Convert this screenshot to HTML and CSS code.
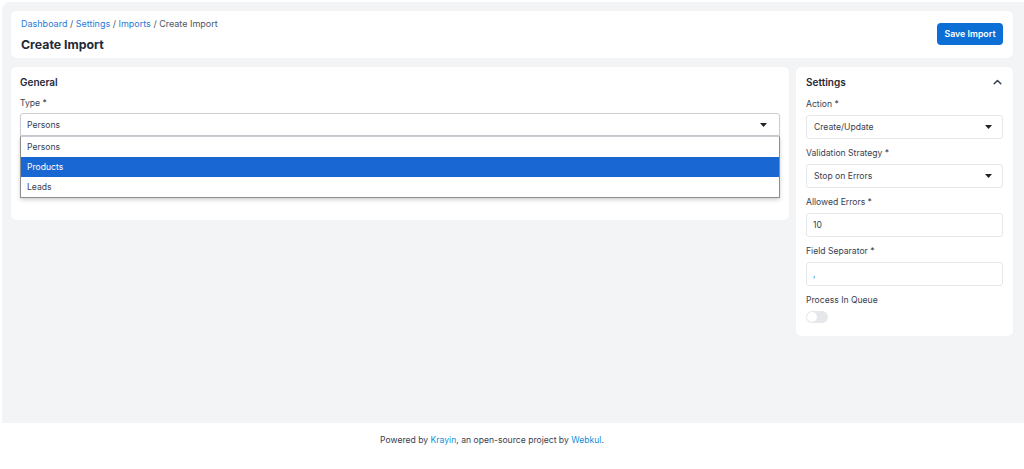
FILE: index.html
```html
<!DOCTYPE html>
<html>
<head>
<meta charset="utf-8">
<link rel="stylesheet" href="styles.css">
</head>
<body>
<div class="page">
  <main class="main">
    <div class="header card">
      <div class="header-text">
        <div class="crumbs"><a>Dashboard</a> / <a>Settings</a> / <a>Imports</a> / <span>Create Import</span></div>
        <h1 class="title">Create Import</h1>
      </div>
      <button class="btn-primary">Save Import</button>
    </div>
    <div class="columns">
      <section class="card general">
        <h2 class="card-title">General</h2>
        <label class="label">Type *</label>
        <div class="select-wrap">
          <div class="select open">
            <span>Persons</span>
            <svg class="caret" width="7" height="4" viewBox="0 0 7 4"><path d="M0 0h7L3.5 4z" fill="#222"/></svg>
          </div>
          <ul class="dropdown">
            <li>Persons</li>
            <li class="active">Products</li>
            <li>Leads</li>
          </ul>
        </div>
      </section>
      <aside class="card settings">
        <div class="settings-head">
          <h2 class="card-title">Settings</h2>
          <svg class="chev" width="9" height="6" viewBox="0 0 9 6"><path d="M1.2 4.8L4.5 1.5 7.8 4.8" fill="none" stroke="#374151" stroke-width="1.5" stroke-linecap="round" stroke-linejoin="round"/></svg>
        </div>
        <div class="field">
          <label class="label">Action *</label>
          <div class="select"><span>Create/Update</span><svg class="caret" width="7" height="4" viewBox="0 0 7 4"><path d="M0 0h7L3.5 4z" fill="#222"/></svg></div>
        </div>
        <div class="field">
          <label class="label">Validation Strategy *</label>
          <div class="select"><span>Stop on Errors</span><svg class="caret" width="7" height="4" viewBox="0 0 7 4"><path d="M0 0h7L3.5 4z" fill="#222"/></svg></div>
        </div>
        <div class="field">
          <label class="label">Allowed Errors *</label>
          <div class="input">10</div>
        </div>
        <div class="field">
          <label class="label">Field Separator *</label>
          <div class="input sep">,</div>
        </div>
        <div class="field last">
          <label class="label">Process In Queue</label>
          <div class="toggle"><span class="knob"></span></div>
        </div>
      </aside>
    </div>
  </main>
  <footer class="footer"><p class="footer-text">Powered by <a>Krayin</a>, an open-source project by <a>Webkul</a>.</p></footer>
</div>
</body>
</html>
```

FILE: styles.css
```css
* { box-sizing: border-box; }
html, body { margin: 0; padding: 0; }
body {
  font-family: Inter, "Noto Sans", sans-serif;
  color: #1f2937;
  background: #fff;
  width: 1024px;
  height: 469px;
  overflow: hidden;
}
.page { display: flex; flex-direction: column; height: 469px; padding-left: 2px; }
.main {
  flex: 1;
  margin-top: 2px;
  background: #f3f4f6;
  border-top-left-radius: 8px;
  padding: 9px 11px 0 9px;
  display: flex;
  flex-direction: column;
  gap: 9px;
}
.card {
  background: #fff;
  border-radius: 5px;
  box-shadow: 0 0 1px rgba(0,0,0,0.06);
}
.header {
  height: 47px;
  display: flex;
  align-items: center;
  justify-content: space-between;
  padding: 0 10px 0 10px;
}
.header-text { display: flex; flex-direction: column; gap: 7px; padding-top: 0; }
.crumbs { font-size: 9px; color: #4b5563; line-height: 12px; }
.crumbs a { color: #2b7bd6; }
.title { margin: 0; font-size: 12.3px; font-weight: 700; color: #1f2937; line-height: 15px; }
.btn-primary {
  background: #0b6fd6;
  color: #fff;
  border: 0;
  border-radius: 4px;
  font-family: inherit;
  font-weight: 600;
  font-size: 8.8px;
  width: 66px;
  height: 22px;
  padding: 0;
  margin-top: -2px;
}
.columns { display: flex; gap: 7px; align-items: flex-start; }
.general { flex: 1; height: 153px; padding: 9px 9px; }
.settings { width: 217px; padding: 9px 10px 13px; }
.card-title { margin: 0; font-size: 10px; font-weight: 600; color: #1f2937; line-height: 12px; }
.label { display: block; font-size: 8.6px; color: #374151; line-height: 11px; }
.general .card-title { margin-bottom: 10px; }
.general .label { margin-bottom: 4px; }
.select-wrap { position: relative; }
.select {
  height: 24px;
  border: 1px solid #e5e7eb;
  border-radius: 3px;
  display: flex;
  align-items: center;
  justify-content: space-between;
  padding: 0 10px 0 7px;
  font-size: 8.6px;
  color: #374151;
}
.select.open {
  height: 23px;
  border-color: #c9ccd1;
  border-radius: 3px 3px 0 0;
  box-shadow: 0 1px 2px rgba(0,0,0,0.08);
  padding: 0 12px 0 6px;
}
.caret { flex: none; }
.dropdown {
  position: absolute;
  left: 0; right: 0; top: 23px;
  margin: 0; padding: 0; list-style: none;
  background: #fff;
  border: 1px solid #8d8d8d;
  border-top-color: #c9ccd1;
  box-shadow: 0 2px 4px rgba(0,0,0,0.18);
  font-size: 8.6px;
  color: #374151;
}
.dropdown li { height: 20px; line-height: 20px; padding-left: 6px; }
.dropdown li.active { background: #1967d2; color: #fff; }
.settings-head { display: flex; justify-content: space-between; align-items: center; margin-bottom: 11px; }
.chev { margin-right: 1px; }
.field { margin-bottom: 9px; }
.field.last { margin-bottom: 0; }
.field .label { margin-bottom: 5px; }
.input {
  height: 24px;
  border: 1px solid #e5e7eb;
  border-radius: 3px;
  display: flex;
  align-items: center;
  padding: 0 6px;
  font-size: 8.6px;
  color: #374151;
}
.input.sep { color: #2b7bd6; }
.toggle {
  width: 22px; height: 12px;
  background: #e5e7eb;
  border-radius: 6px;
  position: relative;
  margin-top: 1px;
}
.knob {
  position: absolute; left: 1px; top: 1px;
  width: 10px; height: 10px; border-radius: 50%;
  background: #fff;
}
.footer {
  height: 46px;
  display: flex;
  justify-content: center;
  padding-right: 42px;
  background: #fff;
}
.footer-text {
  margin: 12px 0 0;
  font-size: 8.6px;
  line-height: 11px;
  color: #374151;
}
.footer-text a { color: #0e90d9; }
```
